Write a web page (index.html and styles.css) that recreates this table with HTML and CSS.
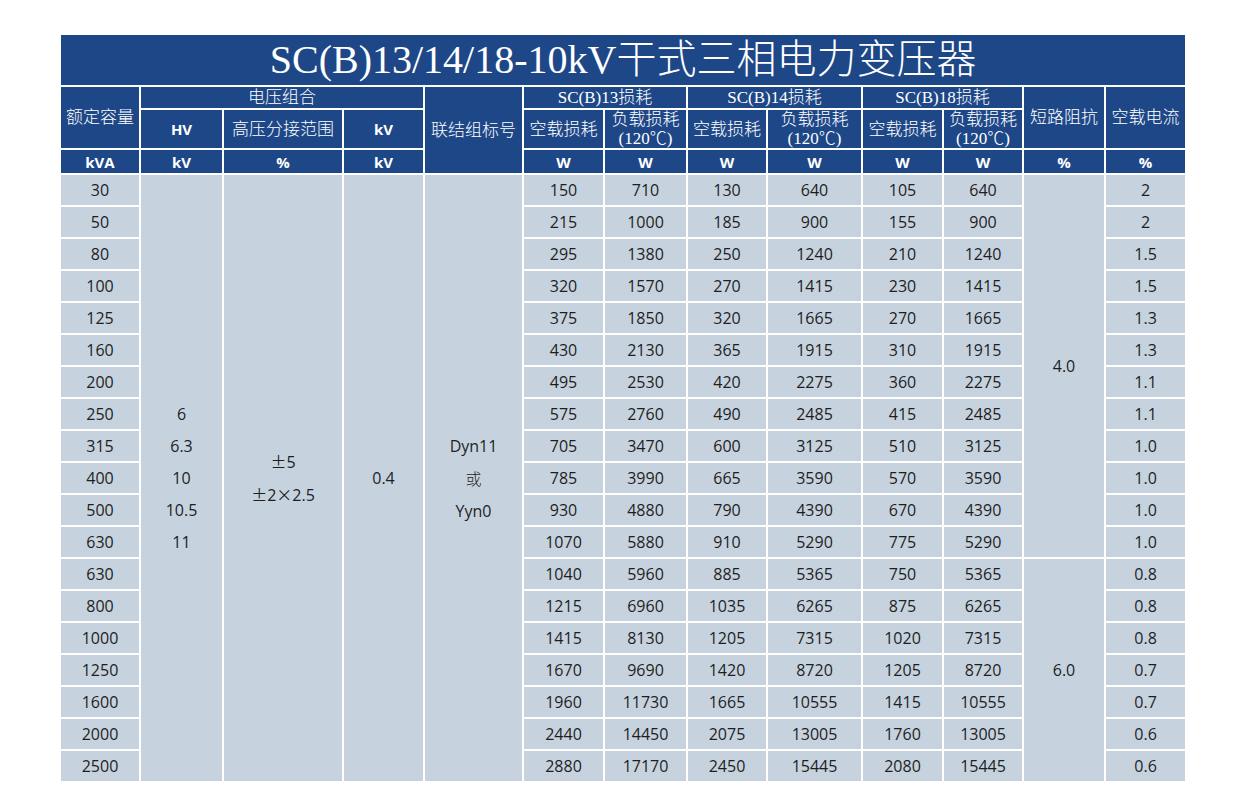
FILE: index.html
```html
<!DOCTYPE html>
<html lang="zh-CN">
<head>
<meta charset="utf-8">
<title>SC(B)13/14/18-10kV干式三相电力变压器</title>
<link rel="stylesheet" href="styles.css">
</head>
<body>
<table class="spec">
  <colgroup>
    <col class="w78"><col class="w81"><col class="w118"><col class="w79"><col class="w97">
    <col class="w79"><col class="w81"><col class="w78"><col class="w93">
    <col class="w79"><col class="w78"><col class="w80"><col class="w79">
  </colgroup>
  <thead>
    <tr class="r-title"><th colspan="13" class="title">SC(B)13/14/18-10kV干式三相电力变压器</th></tr>
    <tr class="r-h1">
      <th rowspan="2" class="cn">额定容量</th>
      <th colspan="3" class="cn">电压组合</th>
      <th rowspan="3" class="cn">联结组标号</th>
      <th colspan="2" class="cn">SC(B)13损耗</th>
      <th colspan="2" class="cn">SC(B)14损耗</th>
      <th colspan="2" class="cn">SC(B)18损耗</th>
      <th rowspan="2" class="cn">短路阻抗</th>
      <th rowspan="2" class="cn">空载电流</th>
    </tr>
    <tr class="r-h2">
      <th class="en">HV</th>
      <th class="cn">高压分接范围</th>
      <th class="en">kV</th>
      <th class="cn">空载损耗</th>
      <th class="cn">负载损耗<br>(120℃)</th>
      <th class="cn">空载损耗</th>
      <th class="cn">负载损耗<br>(120℃)</th>
      <th class="cn">空载损耗</th>
      <th class="cn">负载损耗<br>(120℃)</th>
    </tr>
    <tr class="r-h3">
      <th class="en">kVA</th>
      <th class="en">kV</th>
      <th class="en">%</th>
      <th class="en">kV</th>
      <th class="en">W</th><th class="en">W</th>
      <th class="en">W</th><th class="en">W</th>
      <th class="en">W</th><th class="en">W</th>
      <th class="en">%</th>
      <th class="en">%</th>
    </tr>
  </thead>
  <tbody>
    <tr><td>30</td>
      <td rowspan="19" class="multi">6<br>6.3<br>10<br>10.5<br>11</td>
      <td rowspan="19" class="multi"><span class="sym">±</span>5<br><span class="sym">±</span>2<span class="sym">×</span>2.5</td>
      <td rowspan="19" class="multi">0.4</td>
      <td rowspan="19" class="multi">Dyn11<br><span class="cjk">或</span><br>Yyn0</td>
      <td>150</td><td>710</td><td>130</td><td>640</td><td>105</td><td>640</td>
      <td rowspan="12">4.0</td><td>2</td></tr>
    <tr><td>50</td><td>215</td><td>1000</td><td>185</td><td>900</td><td>155</td><td>900</td><td>2</td></tr>
    <tr><td>80</td><td>295</td><td>1380</td><td>250</td><td>1240</td><td>210</td><td>1240</td><td>1.5</td></tr>
    <tr><td>100</td><td>320</td><td>1570</td><td>270</td><td>1415</td><td>230</td><td>1415</td><td>1.5</td></tr>
    <tr><td>125</td><td>375</td><td>1850</td><td>320</td><td>1665</td><td>270</td><td>1665</td><td>1.3</td></tr>
    <tr><td>160</td><td>430</td><td>2130</td><td>365</td><td>1915</td><td>310</td><td>1915</td><td>1.3</td></tr>
    <tr><td>200</td><td>495</td><td>2530</td><td>420</td><td>2275</td><td>360</td><td>2275</td><td>1.1</td></tr>
    <tr><td>250</td><td>575</td><td>2760</td><td>490</td><td>2485</td><td>415</td><td>2485</td><td>1.1</td></tr>
    <tr><td>315</td><td>705</td><td>3470</td><td>600</td><td>3125</td><td>510</td><td>3125</td><td>1.0</td></tr>
    <tr><td>400</td><td>785</td><td>3990</td><td>665</td><td>3590</td><td>570</td><td>3590</td><td>1.0</td></tr>
    <tr><td>500</td><td>930</td><td>4880</td><td>790</td><td>4390</td><td>670</td><td>4390</td><td>1.0</td></tr>
    <tr><td>630</td><td>1070</td><td>5880</td><td>910</td><td>5290</td><td>775</td><td>5290</td><td>1.0</td></tr>
    <tr><td>630</td><td>1040</td><td>5960</td><td>885</td><td>5365</td><td>750</td><td>5365</td>
      <td rowspan="7">6.0</td><td>0.8</td></tr>
    <tr><td>800</td><td>1215</td><td>6960</td><td>1035</td><td>6265</td><td>875</td><td>6265</td><td>0.8</td></tr>
    <tr><td>1000</td><td>1415</td><td>8130</td><td>1205</td><td>7315</td><td>1020</td><td>7315</td><td>0.8</td></tr>
    <tr><td>1250</td><td>1670</td><td>9690</td><td>1420</td><td>8720</td><td>1205</td><td>8720</td><td>0.7</td></tr>
    <tr><td>1600</td><td>1960</td><td>11730</td><td>1665</td><td>10555</td><td>1415</td><td>10555</td><td>0.7</td></tr>
    <tr><td>2000</td><td>2440</td><td>14450</td><td>2075</td><td>13005</td><td>1760</td><td>13005</td><td>0.6</td></tr>
    <tr><td>2500</td><td>2880</td><td>17170</td><td>2450</td><td>15445</td><td>2080</td><td>15445</td><td>0.6</td></tr>
  </tbody>
</table>
</body>
</html>
```

FILE: styles.css
```css
html, body {
  margin: 0;
  padding: 0;
  background: #ffffff;
}

.spec {
  margin: 33px 0 0 59px;
  border-collapse: separate;
  border-spacing: 2px;
  table-layout: fixed;
  width: 1128px;
  background: #ffffff;
}

.w78 { width: 78px; }
.w79 { width: 79px; }
.w80 { width: 80px; }
.w81 { width: 81px; }
.w93 { width: 93px; }
.w97 { width: 97px; }
.w118 { width: 118px; }

.spec th,
.spec td {
  padding: 0;
  text-align: center;
  vertical-align: middle;
  overflow: hidden;
  white-space: nowrap;
}

.spec th {
  background: #1e4788;
  color: #ffffff;
  font-weight: normal;
}

.spec th.title {
  font-family: "Liberation Serif", "Noto Sans CJK SC", serif;
  font-size: 40px;
  font-weight: 300;
  line-height: 50px;
}

.r-title { height: 50px; }
.r-h1 { height: 21px; }
.r-h2 { height: 38px; }
.r-h3 { height: 23px; }

.spec th.cn {
  font-family: "Liberation Serif", "Noto Sans CJK SC", serif;
  font-size: 17px;
  font-weight: 300;
  line-height: 19px;
}

.spec th.en {
  font-family: "Open Sans", "Liberation Sans", sans-serif;
  font-size: 15px;
  font-weight: bold;
  line-height: 20px;
}

.spec tbody tr { height: 30px; }

.spec td {
  background: #c6d3de;
  color: #1e1e1e;
  font-family: "Open Sans", "Noto Sans CJK SC", sans-serif;
  font-size: 16px;
  line-height: 30px;
}

.spec td.multi {
  line-height: 32px;
}

.sym {
  font-family: "Noto Sans CJK SC", sans-serif;
  font-feature-settings: "fwid";
}

.cjk {
  font-family: "Noto Sans CJK SC", sans-serif;
  font-weight: 300;
}
```
